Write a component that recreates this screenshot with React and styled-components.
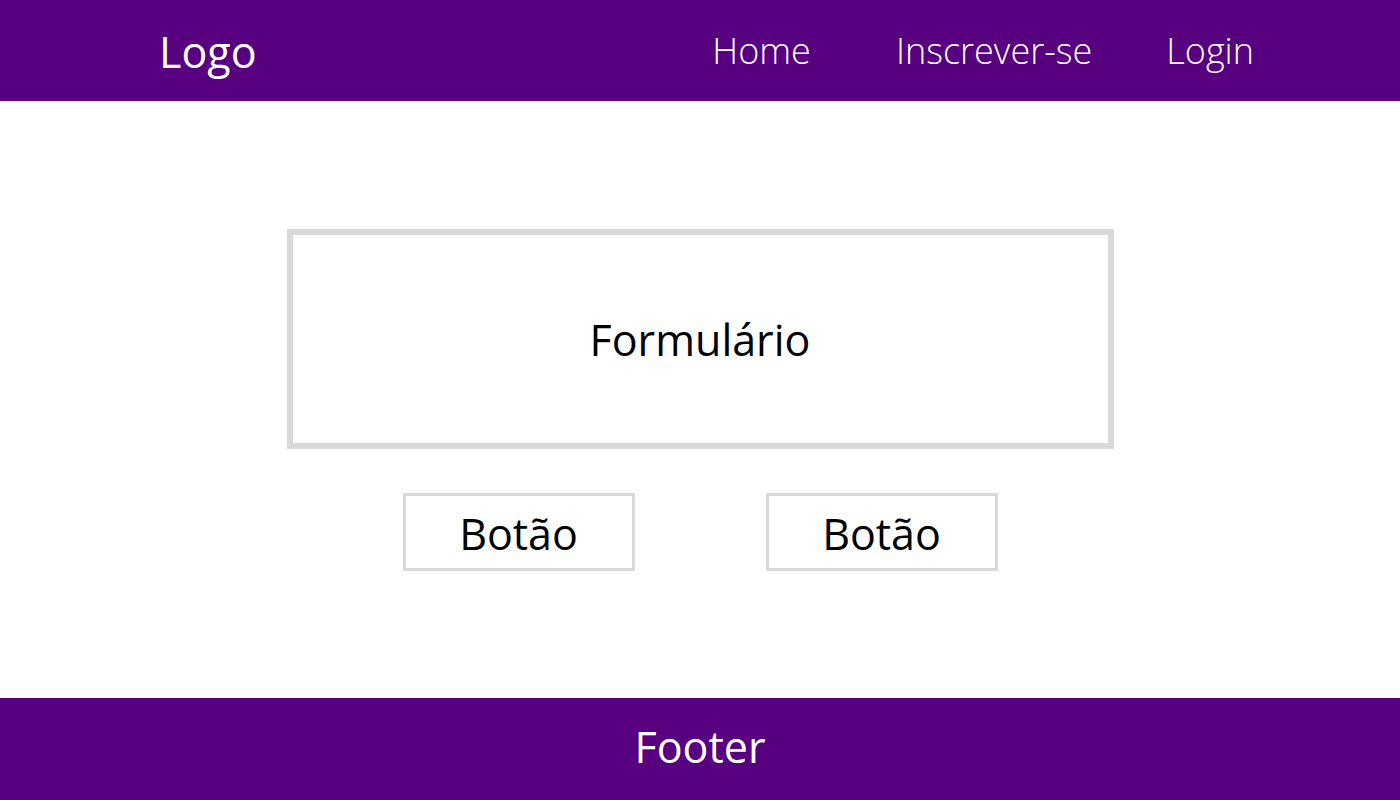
import React from 'react'
import styled, { createGlobalStyle } from 'styled-components'

const purple = '#570080'

const GlobalStyle = createGlobalStyle`
  html, body, #root {
    margin: 0;
    height: 100%;
  }
  body {
    font-family: "Open Sans", "Noto Sans", sans-serif;
    background: #fff;
  }
`

const Page = styled.div`
  height: 100vh;
  display: flex;
  flex-direction: column;
`

const Header = styled.header`
  height: 101px;
  background: ${purple};
  display: flex;
  align-items: center;
  justify-content: space-between;
  padding: 0 146px 0 159px;
  color: #fff;
`

const Logo = styled.div`
  font-size: 43px;
  line-height: 1;
  margin-top: 2px;
`

const Nav = styled.nav`
  display: flex;
  align-items: center;
`

const NavLink = styled.a`
  font-size: 36px;
  font-weight: 300;
  color: #fff;
  text-decoration: none;
  margin-left: ${(p) => p.$gap || 0}px;
`

const Main = styled.main`
  flex: 1;
  display: flex;
  flex-direction: column;
  align-items: center;
  justify-content: center;
  gap: 44px;
`

const FormBox = styled.div`
  box-sizing: border-box;
  width: 827px;
  height: 220px;
  border: 6px solid #d9d9d9;
  display: flex;
  align-items: center;
  justify-content: center;
  padding-top: 2px;
  font-size: 43px;
  color: #000;
`

const Buttons = styled.div`
  display: flex;
  gap: 131px;
`

const Button = styled.button`
  box-sizing: border-box;
  width: 232px;
  height: 78px;
  border: 3px solid #d9d9d9;
  background: #fff;
  font-family: inherit;
  font-size: 43px;
  line-height: 1;
  color: #000;
  padding: 4px 0 0;
`

const Footer = styled.footer`
  box-sizing: border-box;
  height: 102px;
  background: ${purple};
  color: #fff;
  display: flex;
  align-items: center;
  justify-content: center;
  font-size: 43px;
  line-height: 1;
  padding-bottom: 6px;
`

export default function App() {
  return (
    <Page>
      <GlobalStyle />
      <Header>
        <Logo>Logo</Logo>
        <Nav>
          <NavLink href="#">Home</NavLink>
          <NavLink href="#" $gap={85}>Inscrever-se</NavLink>
          <NavLink href="#" $gap={74}>Login</NavLink>
        </Nav>
      </Header>
      <Main>
        <FormBox>Formulário</FormBox>
        <Buttons>
          <Button>Botão</Button>
          <Button>Botão</Button>
        </Buttons>
      </Main>
      <Footer>Footer</Footer>
    </Page>
  )
}
